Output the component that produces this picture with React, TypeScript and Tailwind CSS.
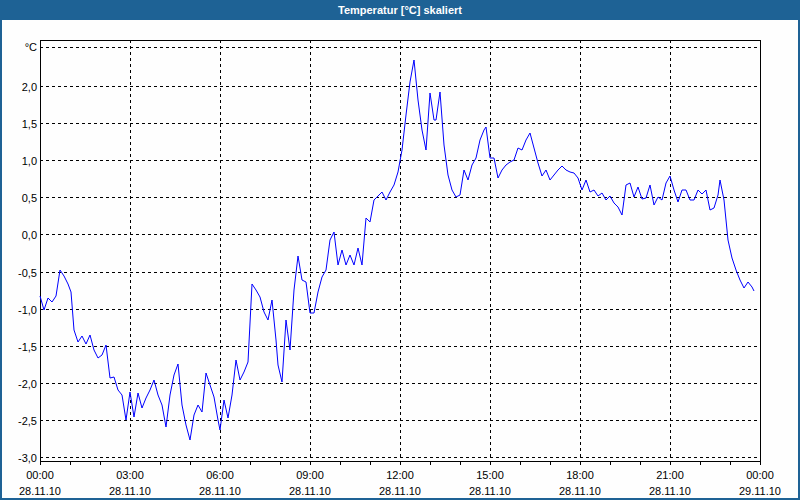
import React from "react";

const pts: [number, number][] = [[40,296],[44,310],[48,298],[52,302],[56,296],[60,270],[64,276],[68,284],[71,292],[74,330],[78,342],[82,336],[86,344],[90,335],[94,350],[98,358],[102,355],[106,345],[110,378],[114,377],[118,390],[122,395],[126,420],[130,392],[134,417],[138,393],[142,408],[146,398],[150,390],[154,380],[158,395],[162,405],[166,427],[170,395],[174,375],[178,364],[182,405],[186,425],[190,440],[194,415],[198,405],[202,412],[206,373],[210,385],[214,397],[218,420],[220,430],[224,400],[228,418],[232,395],[236,360],[240,380],[244,372],[248,362],[252,284],[256,290],[260,297],[264,312],[268,320],[272,300],[276,340],[278,365],[282,382],[286,320],[290,350],[294,290],[298,256],[302,280],[306,282],[310,313],[314,313],[318,292],[322,277],[326,270],[330,240],[334,232],[338,265],[342,250],[346,265],[350,255],[354,265],[358,248],[362,265],[366,218],[370,222],[374,200],[378,196],[382,192],[386,200],[390,192],[394,185],[398,172],[402,150],[406,115],[410,82],[414,60],[418,100],[422,130],[426,150],[430,93],[434,120],[436,120],[440,92],[444,145],[448,175],[452,190],[456,197],[460,195],[464,170],[468,180],[472,165],[476,158],[480,140],[484,130],[486,127],[490,158],[494,158],[498,178],[502,170],[506,165],[510,162],[514,160],[518,148],[522,150],[526,140],[530,133],[534,148],[538,163],[542,176],[546,170],[550,180],[554,175],[558,170],[562,166],[566,170],[570,172],[574,173],[578,178],[582,190],[586,180],[590,192],[594,190],[598,196],[602,193],[606,200],[610,196],[614,203],[618,207],[622,215],[626,185],[630,183],[634,197],[638,187],[642,199],[646,198],[650,185],[654,205],[658,197],[662,200],[666,183],[670,176],[674,190],[678,202],[682,190],[686,190],[690,200],[694,200],[698,190],[702,194],[706,190],[710,210],[714,208],[718,195],[720,180],[724,200],[728,240],[732,258],[736,270],[740,280],[744,288],[748,282],[752,287],[754,291]];

const yl = ["2,0","1,5","1,0","0,5","0,0","-0,5","-1,0","-1,5","-2,0","-2,5","-3,0"];
const xl = ["00:00","03:00","06:00","09:00","12:00","15:00","18:00","21:00","00:00"];

export default function App() {
  const font = { fontFamily: '"Liberation Sans", Arial, sans-serif' };
  return (
    <div className="w-[800px] h-[500px] flex flex-col bg-[#1e6295]" style={font}>
      <div className="h-[20px] flex items-center justify-center text-white text-[11px] font-bold">Temperatur [°C] skaliert</div>
      <div className="flex-1 mx-[2px] mb-[2px] bg-[#fefefe]">
        <svg width="796" height="478" viewBox="2 20 796 478" fontFamily='"Liberation Sans", Arial, sans-serif' fontSize="11">
          <line x1="40" y1="47.5" x2="760" y2="47.5" stroke="#000" strokeDasharray="3 3" />
          <text x="37" y="51" textAnchor="end">°C</text>
          {yl.map((l, i) => {
            const y = Math.round(86 + i * 37.1) + 0.5;
            return (
              <g key={l}>
                <line x1="40" y1={y} x2="760" y2={y} stroke="#000" strokeDasharray="3 3" />
                <text x="37" y={y + 4} textAnchor="end">{l}</text>
              </g>
            );
          })}
          {[1,2,3,4,5,6,7].map(i => (
            <line key={i} x1={40 + i * 90 + 0.5} y1="40" x2={40 + i * 90 + 0.5} y2="457" stroke="#000" strokeDasharray="3 3" />
          ))}
          {Array.from({ length: 25 }, (_, i) => (
            <line key={i} x1={40 + i * 30 + 0.5} y1="461" x2={40 + i * 30 + 0.5} y2="465" stroke="#000" />
          ))}
          <rect x="40.5" y="40.5" width="720" height="421" fill="none" stroke="#000" />
          <polyline points={pts.map(p => p.join(",")).join(" ")} fill="none" stroke="#0000ff" strokeWidth="1" />
          {xl.map((l, i) => (
            <g key={i}>
              <text x={40 + i * 90} y="479" textAnchor="middle">{l}</text>
              <text x={40 + i * 90} y="495" textAnchor="middle">{i === 8 ? "29.11.10" : "28.11.10"}</text>
            </g>
          ))}
        </svg>
      </div>
    </div>
  );
}
